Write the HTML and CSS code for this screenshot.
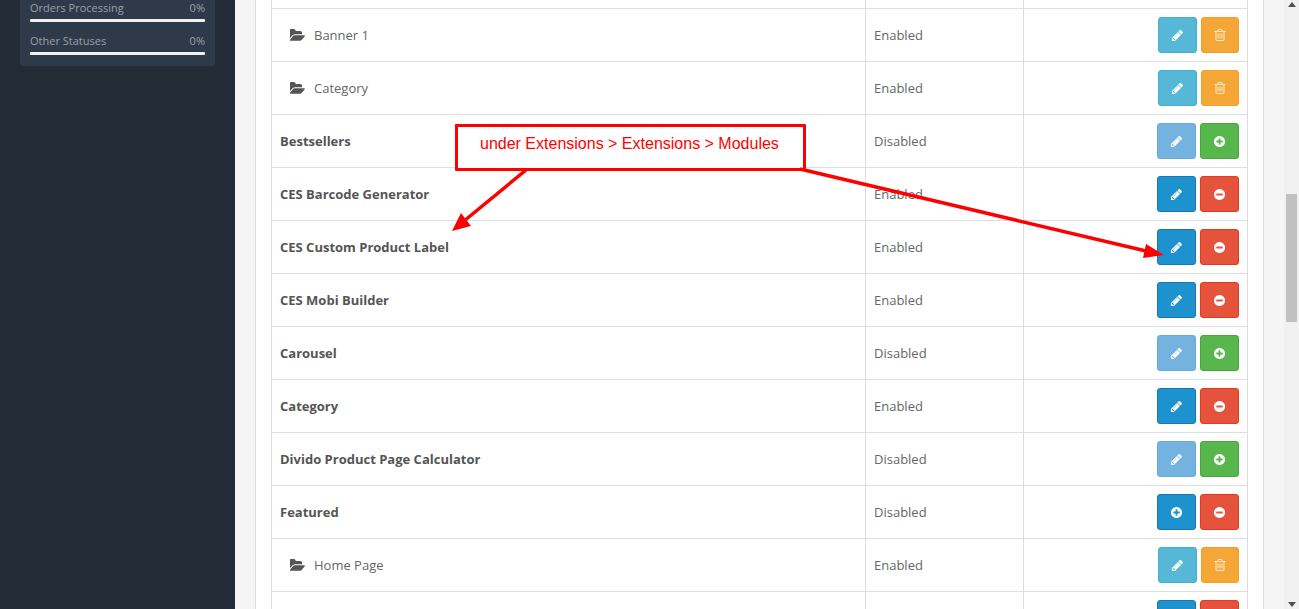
FILE: index.html
```html
<!DOCTYPE html>
<html lang="en">
<head>
<meta charset="utf-8">
<title>Modules</title>
<link rel="stylesheet" href="styles.css">
</head>
<body>
<svg class="defs" aria-hidden="true">
  <symbol id="i-pencil" viewBox="0 0 1792 1792"><path d="M491 1536l91-91-235-235-91 91v107h128v128h107zm523-928q0-22-22-22-10 0-17 7l-542 542q-7 7-7 17 0 22 22 22 10 0 17-7l542-542q7-7 7-17zm-54-192l416 416-832 832h-416v-416zm683 96q0 53-37 90l-166 166-416-416 166-165q36-38 90-38 53 0 91 38l235 234q37 39 37 91z"/></symbol>
  <symbol id="i-plus" viewBox="0 0 1792 1792"><path d="M1344 960v-128q0-26-19-45t-45-19h-256v-256q0-26-19-45t-45-19h-128q-26 0-45 19t-19 45v256h-256q-26 0-45 19t-19 45v128q0 26 19 45t45 19h256v256q0 26 19 45t45 19h128q26 0 45-19t19-45v-256h256q26 0 45-19t19-45zm320-64q0 209-103 385.5t-279.5 279.5-385.5 103-385.5-103-279.5-279.5-103-385.5 103-385.5 279.5-279.5 385.5-103 385.5 103 279.5 279.5 103 385.5z"/></symbol>
  <symbol id="i-minus" viewBox="0 0 1792 1792"><path d="M1344 960v-128q0-26-19-45t-45-19h-768q-26 0-45 19t-19 45v128q0 26 19 45t45 19h768q26 0 45-19t19-45zm320-64q0 209-103 385.5t-279.5 279.5-385.5 103-385.5-103-279.5-279.5-103-385.5 103-385.5 279.5-279.5 385.5-103 385.5 103 279.5 279.5 103 385.5z"/></symbol>
  <symbol id="i-trash" viewBox="0 0 1792 1792"><path d="M704 736v576q0 14-9 23t-23 9h-64q-14 0-23-9t-9-23v-576q0-14 9-23t23-9h64q14 0 23 9t9 23zm256 0v576q0 14-9 23t-23 9h-64q-14 0-23-9t-9-23v-576q0-14 9-23t23-9h64q14 0 23 9t9 23zm256 0v576q0 14-9 23t-23 9h-64q-14 0-23-9t-9-23v-576q0-14 9-23t23-9h64q14 0 23 9t9 23zm128 724v-948h-896v948q0 22 7 40.5t14.5 27 10.5 8.5h832q3 0 10.5-8.5t14.5-27 7-40.5zm-672-1076h448l-48-117q-7-9-17-11h-317q-10 2-17 11zm928 32v64q0 14-9 23t-23 9h-96v948q0 83-47 143.5t-113 60.5h-832q-66 0-113-58.5t-47-141.5v-952h-96q-14 0-23-9t-9-23v-64q0-14 9-23t23-9h309l70-167q15-37 54-63t79-26h320q40 0 79 26t54 63l70 167h309q14 0 23 9t9 23z"/></symbol>
  <symbol id="i-folder" viewBox="0 0 1792 1792"><path d="M1781 931q0 35-35 73l-336 396q-43 51-120.5 86.5t-143.5 35.5h-1088q-34 0-60.5-13t-26.5-43q0-35 35-73l336-396q43-51 120.5-86.5t143.5-35.5h1088q34 0 60.5 13t26.5 43zm-343-345v160h-832q-94 0-197 47.5t-164 119.5l-337 396-5 6q0-4-.5-12.5t-.5-12.5v-960q0-92 66-158t158-66h320q92 0 158 66t66 158v32h544q92 0 158 66t66 158z"/></symbol>
</svg>

<aside class="sidebar">
  <div class="stats">
    <div class="stat">
      <div class="stat-label"><span>Orders Processing</span><span>0%</span></div>
      <div class="stat-bar"></div>
    </div>
    <div class="stat">
      <div class="stat-label"><span>Other Statuses</span><span>0%</span></div>
      <div class="stat-bar"></div>
    </div>
  </div>
</aside>

<main class="content">
  <div class="panel">
    <table class="modules">
      <colgroup><col class="col-name"><col class="col-status"><col class="col-action"></colgroup>
      <tr class="cut-top"><td></td><td></td><td></td></tr>
      <tr><td class="sub"><svg class="folder"><use href="#i-folder"/></svg>Banner 1</td><td>Enabled</td><td class="act"><a class="btn info"><svg><use href="#i-pencil"/></svg></a><a class="btn warning"><svg><use href="#i-trash"/></svg></a></td></tr>
      <tr><td class="sub"><svg class="folder"><use href="#i-folder"/></svg>Category</td><td>Enabled</td><td class="act"><a class="btn info"><svg><use href="#i-pencil"/></svg></a><a class="btn warning"><svg><use href="#i-trash"/></svg></a></td></tr>
      <tr><td class="name">Bestsellers</td><td>Disabled</td><td class="act"><a class="btn primary off"><svg><use href="#i-pencil"/></svg></a><a class="btn success"><svg><use href="#i-plus"/></svg></a></td></tr>
      <tr><td class="name">CES Barcode Generator</td><td>Enabled</td><td class="act"><a class="btn primary"><svg><use href="#i-pencil"/></svg></a><a class="btn danger"><svg><use href="#i-minus"/></svg></a></td></tr>
      <tr><td class="name">CES Custom Product Label</td><td>Enabled</td><td class="act"><a class="btn primary"><svg><use href="#i-pencil"/></svg></a><a class="btn danger"><svg><use href="#i-minus"/></svg></a></td></tr>
      <tr><td class="name">CES Mobi Builder</td><td>Enabled</td><td class="act"><a class="btn primary"><svg><use href="#i-pencil"/></svg></a><a class="btn danger"><svg><use href="#i-minus"/></svg></a></td></tr>
      <tr><td class="name">Carousel</td><td>Disabled</td><td class="act"><a class="btn primary off"><svg><use href="#i-pencil"/></svg></a><a class="btn success"><svg><use href="#i-plus"/></svg></a></td></tr>
      <tr><td class="name">Category</td><td>Enabled</td><td class="act"><a class="btn primary"><svg><use href="#i-pencil"/></svg></a><a class="btn danger"><svg><use href="#i-minus"/></svg></a></td></tr>
      <tr><td class="name">Divido Product Page Calculator</td><td>Disabled</td><td class="act"><a class="btn primary off"><svg><use href="#i-pencil"/></svg></a><a class="btn success"><svg><use href="#i-plus"/></svg></a></td></tr>
      <tr><td class="name">Featured</td><td>Disabled</td><td class="act"><a class="btn primary"><svg><use href="#i-plus"/></svg></a><a class="btn danger"><svg><use href="#i-minus"/></svg></a></td></tr>
      <tr><td class="sub"><svg class="folder"><use href="#i-folder"/></svg>Home Page</td><td>Enabled</td><td class="act"><a class="btn info"><svg><use href="#i-pencil"/></svg></a><a class="btn warning"><svg><use href="#i-trash"/></svg></a></td></tr>
      <tr><td></td><td></td><td class="act"><a class="btn primary"></a><a class="btn danger"></a></td></tr>
    </table>
  </div>
</main>

<div class="scrollbar">
  <span class="arrow up"></span>
  <span class="thumb"></span>
  <span class="arrow down"></span>
</div>

<div class="note">under Extensions &gt; Extensions &gt; Modules</div>
<svg class="arrows" width="1299" height="609" aria-hidden="true">
  <line x1="526" y1="170" x2="464" y2="221"/>
  <polygon points="452,231 461,213 471,226"/>
  <line x1="800" y1="169" x2="1146" y2="251"/>
  <polygon points="1164,255 1143,258 1146,244"/>
</svg>
</body>
</html>
```

FILE: styles.css
```css
* { box-sizing: border-box; }
html, body { margin: 0; height: 609px; overflow: hidden; }
body {
  display: flex;
  position: relative;
  font-family: "Open Sans", sans-serif;
  font-size: 13px;
  color: #666;
  background: #f5f5f5;
}
.defs { display: none; }

.sidebar { flex: 0 0 235px; background: #232b36; padding: 0 20px; }
.stats { background: #2e3a4a; padding: 0 10px; border-radius: 0 0 3px 3px; height: 66px; }
.stat { height: 33px; }
.stat-label { display: flex; justify-content: space-between; height: 19px; font-size: 11px; line-height: 16px; color: #9aa0a6; }
.stat-bar { height: 3px; background: #f1f1f1; border-radius: 1px; }

.content { flex: 1; padding: 0 20px; min-width: 0; }
.panel { height: 609px; background: #fff; border: solid #ddd; border-width: 0 1px; padding: 0 15px; overflow: hidden; }
.modules { width: 977px; border-collapse: collapse; table-layout: fixed; }
.col-name { width: 594px; }
.col-status { width: 158px; }
.modules td { border: 1px solid #ddd; padding: 8px; height: 53px; vertical-align: middle; }
.modules .cut-top td { height: 8px; padding: 0; border-top: 0; }
.name { font-weight: 700; color: #555; }
.modules .sub { padding-left: 18px; color: #666; }
.folder { width: 15px; height: 15px; margin-right: 9px; fill: #555; vertical-align: -3px; }
.act { text-align: right; font-size: 0; }

.btn { display: inline-flex; align-items: center; justify-content: center; width: 39px; height: 36px; margin-left: 4px; border: 1px solid; border-radius: 3px; vertical-align: top; }
.btn svg { width: 13px; height: 13px; margin-top: 1px; fill: #fff; }
.info { background: #56b8d6; border-color: #45afcf; }
.warning { width: 38px; background: #f4a737; border-color: #f3a02a; }
.warning svg { width: 14px; height: 14px; margin-top: 0; fill: #ffe9c8; }
.primary { background: #1e91cf; border-color: #1978ab; }
.primary.off { background: #74b3df; border-color: #66acd9; }
.success { background: #58b74c; border-color: #4ca342; }
.danger { background: #e5533d; border-color: #e3391f; }

.scrollbar { flex: 0 0 15px; display: flex; flex-direction: column; align-items: center; background: #f1f1f1; }
.arrow { width: 0; height: 0; border: 4px solid transparent; }
.up { margin-top: 2px; border-top: 0; border-bottom: 5px solid #505050; }
.down { margin-top: auto; margin-bottom: 2px; border-bottom: 0; border-top: 5px solid #505050; }
.thumb { width: 11px; height: 128px; margin-top: 187px; background: #c1c1c1; }

.note {
  position: absolute; left: 455px; top: 124px; width: 351px; height: 47px;
  border: 3px solid #f00; border-radius: 1px; background: #fff;
  padding: 7px 0 0 22px;
  font-family: "Liberation Sans", Arial, sans-serif; font-size: 16px; line-height: 20px; color: #f00;
}
.arrows { position: absolute; left: 0; top: 0; pointer-events: none; }
.arrows line { stroke: #f00; stroke-width: 3.5; }
.arrows polygon { fill: #f00; }
```
